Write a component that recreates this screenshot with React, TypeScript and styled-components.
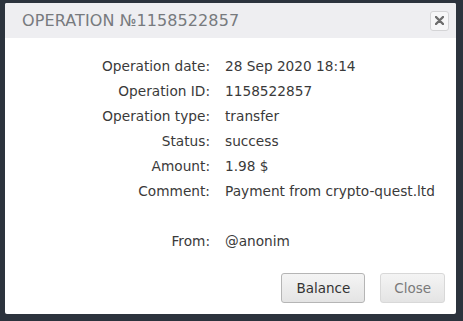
import React from "react";
import styled, { createGlobalStyle } from "styled-components";

const Global = createGlobalStyle`
  html, body { margin: 0; padding: 0; background: #2c333d; }
  body { width: 463px; height: 321px; overflow: hidden; font-family: "DejaVu Sans", sans-serif; }
`;

const Screen = styled.div`
  width: 463px;
  height: 321px;
  padding: 3px 7px 7px 5px;
  box-sizing: border-box;
  display: flex;
`;

const Dialog = styled.div`
  flex: 1;
  background: #ffffff;
  display: flex;
  flex-direction: column;
  border-radius: 2px;
  overflow: hidden;
`;

const Header = styled.div`
  height: 35px;
  background: #eeeef1;
  display: flex;
  align-items: center;
  justify-content: space-between;
  padding: 0 7px 0 17px;
`;

const Title = styled.div`
  font-family: "DejaVu Sans", sans-serif;
  font-size: 16px;
  letter-spacing: 0.1px;
  color: #777a7e;
  text-transform: uppercase;
`;

const CloseX = styled.button`
  width: 19px;
  height: 20px;
  border: 1px solid #d4d4d6;
  border-radius: 3px;
  background: #f7f7f8;
  display: flex;
  align-items: center;
  justify-content: center;
  padding: 0;
`;

const Body = styled.div`
  flex: 1;
  padding-top: 16px;
  display: grid;
  grid-template-columns: 205px 1fr;
  column-gap: 15px;
  grid-auto-rows: 25px;
  align-content: start;
  font-size: 13.7px;
  color: #3a3a3a;
`;

const Label = styled.div`
  text-align: right;
  line-height: 25px;
  white-space: nowrap;
`;

const Value = styled.div`
  line-height: 25px;
  white-space: nowrap;
`;

const Footer = styled.div`
  display: flex;
  justify-content: flex-end;
  gap: 15px;
  padding: 0 11px 11px 0;
`;

const Btn = styled.button<{ $muted?: boolean }>`
  height: 30px;
  padding: 0 ${(p) => (p.$muted ? "13px" : "14px")};
  border: 1px solid ${(p) => (p.$muted ? "#d8d8d8" : "#b5b5b5")};
  border-radius: 3px;
  background: linear-gradient(#f4f4f4, #e4e4e4);
  font-family: "DejaVu Sans", sans-serif;
  font-size: 13.5px;
  color: ${(p) => (p.$muted ? "#7a7a7a" : "#333333")};
`;

const rows: [string, string][] = [
  ["Operation date:", "28 Sep 2020 18:14"],
  ["Operation ID:", "1158522857"],
  ["Operation type:", "transfer"],
  ["Status:", "success"],
  ["Amount:", "1.98 $"],
  ["Comment:", "Payment from crypto-quest.ltd"],
  ["", ""],
  ["From:", "@anonim"],
];

export default function App() {
  return (
    <>
      <Global />
      <Screen>
        <Dialog>
          <Header>
            <Title>Operation №1158522857</Title>
            <CloseX aria-label="close">
              <svg width="9" height="9" viewBox="0 0 9 9">
                <path d="M1 1L8 8M8 1L1 8" stroke="#6d6d6d" strokeWidth="2.4" strokeLinecap="round" />
              </svg>
            </CloseX>
          </Header>
          <Body>
            {rows.map(([l, v], i) => (
              <React.Fragment key={i}>
                <Label>{l}</Label>
                <Value>{v}</Value>
              </React.Fragment>
            ))}
          </Body>
          <Footer>
            <Btn>Balance</Btn>
            <Btn $muted>Close</Btn>
          </Footer>
        </Dialog>
      </Screen>
    </>
  );
}
